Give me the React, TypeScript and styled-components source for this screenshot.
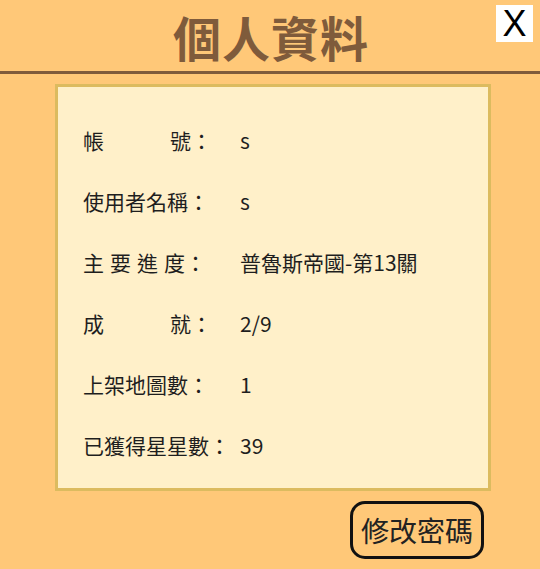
import styled, { createGlobalStyle } from "styled-components";

const GlobalStyle = createGlobalStyle`
  html, body {
    margin: 0;
    padding: 0;
    background: #ffc878;
  }
  body {
    font-family: "Noto Sans CJK TC", "Noto Sans", sans-serif;
  }
`;

type Field = {
  chars: string[];
  gap: number;
  value: string;
};

const fields: Field[] = [
  { chars: ["帳", "號"], gap: 66, value: "s" },
  { chars: ["使", "用", "者", "名", "稱"], gap: 0, value: "s" },
  { chars: ["主", "要", "進", "度"], gap: 6, value: "普魯斯帝國-第13關" },
  { chars: ["成", "就"], gap: 66, value: "2/9" },
  { chars: ["上", "架", "地", "圖", "數"], gap: 0, value: "1" },
  { chars: ["已", "獲", "得", "星", "星", "數"], gap: 0, value: "39" },
];

export default function App() {
  return (
    <>
      <GlobalStyle />
      <Page>
        <Header>
          <Title>個人資料</Title>
          <CloseButton>X</CloseButton>
        </Header>
        <Card>
          {fields.map((f, i) => (
            <Row key={i}>
              <Label $gap={f.gap}>
                {f.chars.map((c, j) => (
                  <span key={j}>{c}</span>
                ))}
                <span>：</span>
              </Label>
              <Value>{f.value}</Value>
            </Row>
          ))}
        </Card>
        <Footer>
          <EditButton>修改密碼</EditButton>
        </Footer>
      </Page>
    </>
  );
}

const Page = styled.div`
  width: 540px;
  height: 569px;
  background: #ffc878;
  display: flex;
  flex-direction: column;
  overflow: hidden;
`;

const Header = styled.div`
  position: relative;
  height: 71px;
  border-bottom: 3px solid #7f5b3b;
  display: flex;
  justify-content: center;
  align-items: center;
`;

const Title = styled.h1`
  margin: 0;
  padding-left: 2px;
  font-size: 48px;
  font-weight: 700;
  letter-spacing: 1px;
  line-height: 1;
  color: #7f5b3b;
`;

const CloseButton = styled.div`
  position: absolute;
  top: 5px;
  right: 7px;
  width: 37px;
  height: 37px;
  background: #ffffff;
  color: #000000;
  font-family: "Liberation Sans", Arial, sans-serif;
  font-size: 36px;
  line-height: 37px;
  text-align: center;
  cursor: pointer;
`;

const Card = styled.div`
  box-sizing: border-box;
  width: 436px;
  height: 407px;
  margin: 10px 0 0 55px;
  padding: 23px 0 0 25px;
  background: #fff0c9;
  border: 3px solid #dcbb5f;
  display: flex;
  flex-direction: column;
`;

const Row = styled.div`
  height: 61px;
  display: flex;
  align-items: center;
  font-size: 21px;
  line-height: 1;
  color: #1e1e1e;
`;

const Label = styled.div<{ $gap: number }>`
  width: 157px;
  flex-shrink: 0;
  display: flex;
  gap: ${(p) => p.$gap}px;
  & span:last-child {
    margin-left: ${(p) => (p.$gap > 0 ? -p.$gap : 0)}px;
  }
`;

const Value = styled.div`
  white-space: nowrap;
`;

const Footer = styled.div`
  display: flex;
  justify-content: flex-end;
  padding: 10px 56px 0 0;
`;

const EditButton = styled.button`
  box-sizing: border-box;
  width: 134px;
  height: 58px;
  padding: 0;
  border: 3px solid #111111;
  border-radius: 15px;
  background: transparent;
  font-family: "Noto Sans CJK TC", sans-serif;
  font-size: 28px;
  line-height: 1;
  color: #222222;
  cursor: pointer;
`;
